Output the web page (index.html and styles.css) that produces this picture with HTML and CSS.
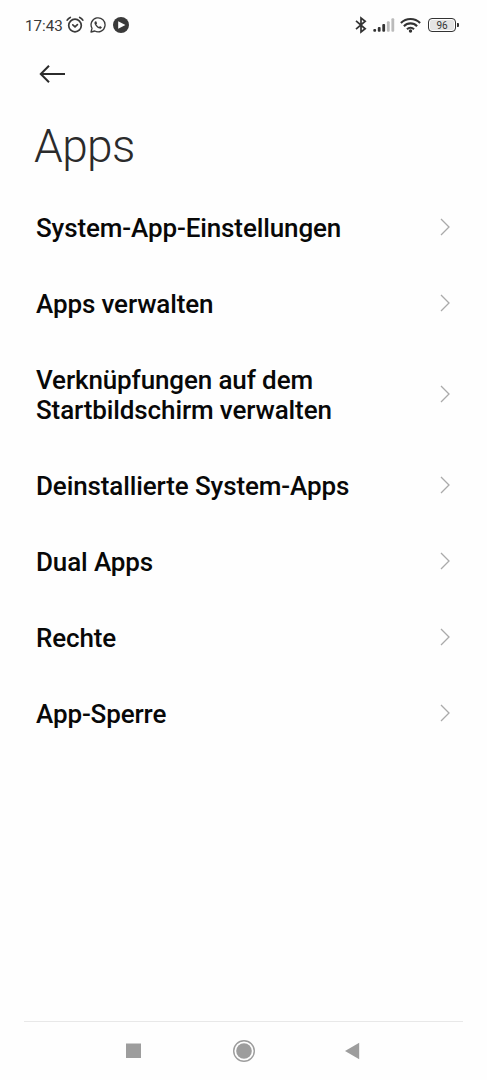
FILE: index.html
```
<!DOCTYPE html>
<html lang="de">
<head>
  <meta charset="UTF-8">
  <meta name="viewport" content="width=device-width, initial-scale=1.0">
  <title>Apps</title>
  <link rel="stylesheet" href="styles.css">
</head>
<body>
  <div class="status-bar">
    <div class="status-left">
      <span class="time">17:43</span>
      <svg class="alarm" width="18" height="18" viewBox="0 0 18 18" fill="none" stroke="#3a3a3a" stroke-width="1.7" stroke-linecap="round">
        <circle cx="9" cy="9.5" r="6.3"/>
        <path d="M6.8 8.9L9 10.8L11.4 8.6M1.2 4.2Q2.2 2.4 4.3 1.4M16.8 4.2Q15.8 2.4 13.7 1.4"/>
      </svg>
      <svg class="whatsapp" width="16" height="16" viewBox="0 0 16 16">
        <path d="M1 15L2 11.3A7 7 0 1 1 4.8 14Z" fill="none" stroke="#3a3a3a" stroke-width="1.3" stroke-linejoin="round"/>
        <path d="M5.4 4.2C4.5 4.7 4.2 5.8 4.7 7C5.6 9.2 7.2 10.9 9.4 11.6C10.6 12 11.7 11.3 11.9 10.2L10 9.1L9.1 10C7.8 9.5 6.9 8.5 6.3 7.3L7.1 6.4L6.4 4.4Z" fill="#3a3a3a"/>
      </svg>
      <svg class="play" width="16" height="16" viewBox="0 0 16 16">
        <circle cx="8" cy="8" r="8" fill="#3a3a3a"/>
        <path d="M5.2 4.3L12.4 8L5.2 11.7Z" fill="#fff"/>
      </svg>
    </div>
    <div class="status-right">
      <svg class="bluetooth" width="12" height="18" viewBox="0 0 12 18" fill="none" stroke="#333" stroke-width="1.7">
        <path d="M1 4.8L10.2 12.8L6 16V2L10.2 5.2L1 13.2"/>
      </svg>
      <svg class="signal" width="22" height="16" viewBox="0 0 22 16">
        <g fill="#333">
          <rect x="0.3" y="12" width="2.8" height="2.7" rx="1"/>
          <rect x="4.8" y="10" width="2.8" height="4.7" rx="1"/>
          <rect x="9.3" y="7" width="2.8" height="7.7" rx="1"/>
        </g>
        <g fill="#bbb">
          <rect x="13.9" y="4.3" width="2.8" height="10.4" rx="1"/>
          <rect x="18.4" y="1.3" width="2.8" height="13.4" rx="1"/>
        </g>
      </svg>
      <svg class="wifi" width="21" height="16" viewBox="0 0 21 16" fill="none" stroke="#333" stroke-width="2.1">
        <path d="M0.9 6A13.6 13.6 0 0 1 20.1 6M3.9 9.2A9.2 9.2 0 0 1 17.1 9.2M7 12.2A4.9 4.9 0 0 1 14 12.2"/>
        <circle cx="10.5" cy="14" r="1.7" fill="#333" stroke="none"/>
      </svg>
      <div class="battery">96</div>
    </div>
  </div>

  <header>
    <svg class="back" width="28" height="20" viewBox="0 0 28 20" fill="none" stroke="#2b2b2b" stroke-width="2">
      <path d="M27 10H3M11 1.8L2.8 10L11 18.2"/>
    </svg>
    <h1>Apps</h1>
  </header>

  <ul class="menu">
    <li><span>System-App-Einstellungen</span><svg class="chevron" viewBox="0 0 10 18"><path d="M1 1L9 9L1 17"/></svg></li>
    <li><span>Apps verwalten</span><svg class="chevron" viewBox="0 0 10 18"><path d="M1 1L9 9L1 17"/></svg></li>
    <li><span>Verknüpfungen auf dem Startbildschirm verwalten</span><svg class="chevron" viewBox="0 0 10 18"><path d="M1 1L9 9L1 17"/></svg></li>
    <li><span>Deinstallierte System-Apps</span><svg class="chevron" viewBox="0 0 10 18"><path d="M1 1L9 9L1 17"/></svg></li>
    <li><span>Dual Apps</span><svg class="chevron" viewBox="0 0 10 18"><path d="M1 1L9 9L1 17"/></svg></li>
    <li><span>Rechte</span><svg class="chevron" viewBox="0 0 10 18"><path d="M1 1L9 9L1 17"/></svg></li>
    <li><span>App-Sperre</span><svg class="chevron" viewBox="0 0 10 18"><path d="M1 1L9 9L1 17"/></svg></li>
  </ul>

  <nav>
    <svg width="16" height="16" viewBox="0 0 16 16"><rect x="0" y="0.5" width="15" height="14.5" fill="#9d9d9d"/></svg>
    <svg width="22" height="22" viewBox="0 0 22 22">
      <circle cx="11" cy="11" r="10.3" fill="none" stroke="#9d9d9d" stroke-width="1.4"/>
      <circle cx="11" cy="11" r="7.8" fill="#9d9d9d"/>
    </svg>
    <svg width="16" height="18" viewBox="0 0 16 18"><path d="M0 9L14.2 0.7V17.3Z" fill="#9d9d9d"/></svg>
  </nav>
</body>
</html>
```

FILE: styles.css
```
* { box-sizing:border-box; }
body { margin:0; height:1080px; display:flex; flex-direction:column; background:#fefefe; color:#080808; font-family:Roboto,sans-serif; overflow:hidden; }
svg { display:block; flex:none; }

.status-bar { height:50px; padding:0 31px 0 25px; display:flex; justify-content:space-between; align-items:center; color:#3a3a3a; }
.status-left, .status-right { display:flex; align-items:center; }
.time { width:41px; padding-top:1px; font-size:15.2px; line-height:18px; white-space:nowrap; }
.whatsapp { margin-left:6px; }
.play { margin-left:7px; }
.signal { margin-left:6px; }
.wifi { margin-left:5px; }
.battery { position:relative; width:28px; height:14px; margin-left:7px; border:1.5px solid #333; border-radius:4px; background:#e4e4e4; box-shadow:inset 0 0 0 1px #fefefe; font-size:10px; line-height:13px; text-align:center; color:#333; }
.battery::after { content:""; position:absolute; right:-4px; top:4px; width:2px; height:4px; border-radius:0 1px 1px 0; background:#333; }

header { height:139px; padding:14px 34px 0; }
.back { margin-left:4px; }
h1 { margin:34px 0 0; font-size:46px; font-weight:300; line-height:56px; letter-spacing:-0.6px; color:#2b2b2b; }

.menu { list-style:none; margin:0; padding:0 37px 0 36px; flex:1; }
.menu li { min-height:76px; padding:23px 0; display:flex; justify-content:space-between; align-items:center; font-size:26px; font-weight:500; line-height:30px; letter-spacing:-0.12px; }
.menu span { width:330px; margin:1px 0 -1px; }
.chevron { width:10px; height:18px; fill:none; stroke:#aaa; stroke-width:1.3; }

nav { height:59px; margin:0 24px; padding:0 102px; border-top:1px solid #e8e8e8; display:flex; justify-content:space-between; align-items:center; }
```
